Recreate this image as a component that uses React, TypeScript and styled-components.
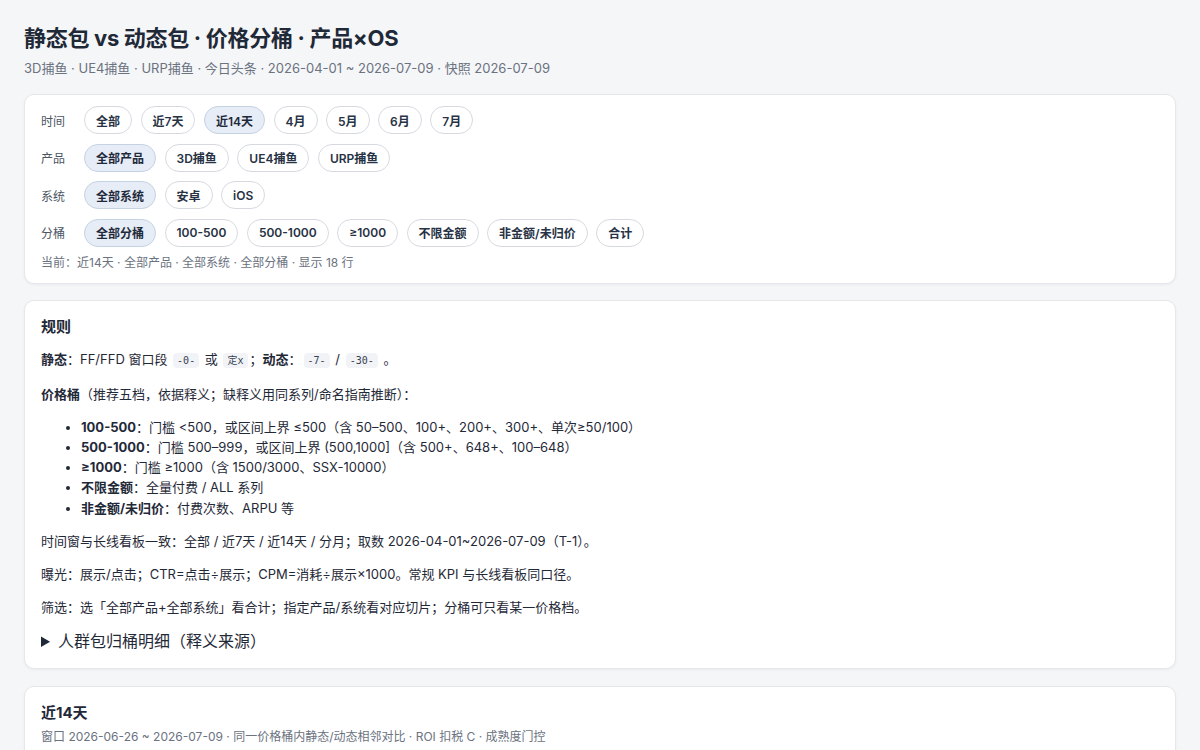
import React, { useState } from "react";
import styled, { createGlobalStyle } from "styled-components";

const GlobalStyle = createGlobalStyle`
  body {
    margin: 0;
    background: #f5f6f8;
    font-family: "Inter", "Noto Sans CJK SC", "Noto Sans", sans-serif;
    color: #1f2937;
  }
`;

const Page = styled.div`
  padding: 24px 24px 24px;
`;

const Title = styled.h1`
  margin: 0 0 6px;
  font-size: 22px;
  line-height: 28px;
  font-weight: 700;
  color: #1f2937;
  letter-spacing: -0.3px;
`;

const Subtitle = styled.div`
  font-size: 13px;
  line-height: 20px;
  color: #6b7280;
  margin-bottom: 16px;
`;

const Card = styled.section<{ $pad?: string; $mb?: number }>`
  background: #fff;
  border: 1px solid #e5e7eb;
  border-radius: 10px;
  box-shadow: 0 1px 3px rgba(15, 23, 42, 0.05);
  padding: ${({ $pad }) => $pad || "15px 16px 16px"};
  margin-bottom: ${({ $mb }) => ($mb ?? 16)}px;
`;

const FilterRows = styled.div`
  display: flex;
  flex-direction: column;
  gap: 9.5px;
`;

const FilterRow = styled.div`
  display: flex;
  align-items: center;
  gap: 8.5px;
`;

const RowLabel = styled.span`
  width: 33px;
  margin-right: 1.5px;
  font-size: 12px;
  color: #4b5563;
`;

const Chip = styled.button<{ $active?: boolean }>`
  height: 28px;
  padding: 0 11px;
  border-radius: 999px;
  border: 1px solid ${({ $active }) => ($active ? "#c5d2e4" : "#d6dae0")};
  background: ${({ $active }) => ($active ? "#e7edf6" : "#fff")};
  color: ${({ $active }) => ($active ? "#1e2a3b" : "#273244")};
  font-family: inherit;
  font-size: 12px;
  font-weight: 600;
  cursor: pointer;
  white-space: nowrap;
`;

const Current = styled.div`
  margin-top: 7px;
  font-size: 12px;
  line-height: 18px;
  color: #6b7280;
`;

const CardTitle = styled.h3<{ $mb?: number }>`
  margin: 0 0 ${({ $mb }) => ($mb ?? 11)}px;
  font-size: 15px;
  line-height: 22px;
  font-weight: 700;
  color: #1f2937;
`;

const Para = styled.p`
  margin: 0 0 13px;
  font-size: 13px;
  line-height: 20px;
  color: #1f2937;
`;

const Code = styled.code`
  font-family: "DejaVu Sans Mono", "Liberation Mono", "Noto Sans CJK SC", monospace;
  font-size: 10px;
  background: #f1f3f6;
  border-radius: 4px;
  padding: 2px 4px;
  margin: 0 2px;
  color: #374151;
`;

const List = styled.ul`
  margin: 0 0 13px;
  padding-left: 40px;
  font-size: 13px;
  line-height: 20.25px;
`;

const Details = styled.details`
  font-size: 16px;
  line-height: 22px;
  color: #1f2937;
`;

const Summary = styled.summary`
  cursor: pointer;
`;

const Meta = styled.div`
  font-size: 12px;
  line-height: 18px;
  color: #6b7280;
`;

const filterDefs = [
  { label: "时间", key: "time", opts: ["全部", "近7天", "近14天", "4月", "5月", "6月", "7月"] },
  { label: "产品", key: "prod", opts: ["全部产品", "3D捕鱼", "UE4捕鱼", "URP捕鱼"] },
  { label: "系统", key: "os", opts: ["全部系统", "安卓", "iOS"] },
  {
    label: "分桶",
    key: "bucket",
    opts: ["全部分桶", "100-500", "500-1000", "≥1000", "不限金额", "非金额/未归价", "合计"],
  },
];

export default function App() {
  const [sel, setSel] = useState<Record<string, string>>({
    time: "近14天",
    prod: "全部产品",
    os: "全部系统",
    bucket: "全部分桶",
  });

  return (
    <Page>
      <GlobalStyle />
      <Title>静态包 vs 动态包 · 价格分桶 · 产品×OS</Title>
      <Subtitle>
        3D捕鱼 · UE4捕鱼 · URP捕鱼 · 今日头条 · 2026-04-01 ~ 2026-07-09 · 快照 2026-07-09
      </Subtitle>

      <Card $pad="11px 16px 11px">
        <FilterRows>
          {filterDefs.map((f) => (
            <FilterRow key={f.key}>
              <RowLabel>{f.label}</RowLabel>
              {f.opts.map((o) => (
                <Chip
                  key={o}
                  $active={sel[f.key] === o}
                  onClick={() => setSel((s) => ({ ...s, [f.key]: o }))}
                >
                  {o}
                </Chip>
              ))}
            </FilterRow>
          ))}
        </FilterRows>
        <Current>
          当前：{sel.time} · {sel.prod} · {sel.os} · {sel.bucket} · 显示 18 行
        </Current>
      </Card>

      <Card $mb={17}>
        <CardTitle>规则</CardTitle>
        <Para>
          <b>静态</b>：FF/FFD 窗口段 <Code>-0-</Code> 或 <Code>定x</Code>；<b>动态</b>：
          <Code>-7-</Code> / <Code>-30-</Code> 。
        </Para>
        <Para>
          <b>价格桶</b>（推荐五档，依据释义；缺释义用同系列/命名指南推断）：
        </Para>
        <List>
          <li>
            <b>100-500</b>：门槛 &lt;500，或区间上界 ≤500（含 50–500、100+、200+、300+、单次≥50/100）
          </li>
          <li>
            <b>500-1000</b>：门槛 500–999，或区间上界 (500,1000]（含 500+、648+、100–648）
          </li>
          <li>
            <b>≥1000</b>：门槛 ≥1000（含 1500/3000、SSX-10000）
          </li>
          <li>
            <b>不限金额</b>：全量付费 / ALL 系列
          </li>
          <li>
            <b>非金额/未归价</b>：付费次数、ARPU 等
          </li>
        </List>
        <Para>
          时间窗与长线看板一致：全部 / 近7天 / 近14天 / 分月；取数 2026-04-01~2026-07-09（T-1）。
        </Para>
        <Para>曝光：展示/点击；CTR=点击÷展示；CPM=消耗÷展示×1000。常规 KPI 与长线看板同口径。</Para>
        <Para>筛选：选「全部产品+全部系统」看合计；指定产品/系统看对应切片；分桶可只看某一价格档。</Para>
        <Details>
          <Summary>人群包归桶明细（释义来源）</Summary>
        </Details>
      </Card>

      <Card $pad="15px 16px 16px">
        <CardTitle $mb={4}>近14天</CardTitle>
        <Meta>
          窗口 2026-06-26 ~ 2026-07-09 · 同一价格桶内静态/动态相邻对比 · ROI 扣税 C · 成熟度门控
        </Meta>
      </Card>
    </Page>
  );
}
